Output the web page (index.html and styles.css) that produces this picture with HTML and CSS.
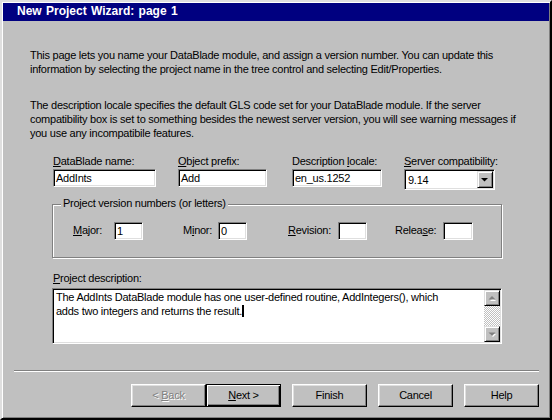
FILE: index.html
```html
<!DOCTYPE html>
<html>
<head>
<meta charset="utf-8">
<title>New Project Wizard</title>
<link rel="stylesheet" href="styles.css">
</head>
<body>
<div class="window">
  <div class="titlebar">New Project Wizard: page 1</div>
  <div class="body">
    <p class="intro">This page lets you name your DataBlade module, and assign a version number. You can update this<br>information by selecting the project name in the tree control and selecting Edit/Properties.</p>
    <p class="intro p2">The description locale specifies the default GLS code set for your DataBlade module. If the server<br>compatibility box is set to something besides the newest server version, you will see warning messages if<br>you use any incompatibile features.</p>

    <div class="fields">
      <div class="field">
        <label class="flabel"><u>D</u>ataBlade name:</label>
        <div class="edit w-name">AddInts</div>
      </div>
      <div class="field">
        <label class="flabel"><u>O</u>bject prefix:</label>
        <div class="edit w-prefix">Add</div>
      </div>
      <div class="field">
        <label class="flabel">Description <u>l</u>ocale:</label>
        <div class="edit w-locale">en_us.1252</div>
      </div>
      <div class="field">
        <label class="flabel"><u>S</u>erver compatibility:</label>
        <div class="combo">
          <span class="combo-text">9.14</span>
          <span class="combo-btn"><svg width="16" height="17" viewBox="0 0 16 17"><polygon points="4,7 11,7 7.5,10.5" fill="#000"/></svg></span>
        </div>
      </div>
    </div>

    <div class="group">
      <span class="legend">Project version numbers (or letters)</span>
      <div class="vrow">
        <div class="vfield"><label class="vlabel"><u>M</u>ajor:</label><div class="edit small">1</div></div>
        <div class="vfield"><label class="vlabel">M<u>i</u>nor:</label><div class="edit small">0</div></div>
        <div class="vfield"><label class="vlabel"><u>R</u>evision:</label><div class="edit small"></div></div>
        <div class="vfield"><label class="vlabel">Relea<u>s</u>e:</label><div class="edit small wide"></div></div>
      </div>
    </div>

    <label class="desc-label"><u>P</u>roject description:</label>
    <div class="memo">
      <div class="memo-text">The AddInts DataBlade module has one user-defined routine, AddIntegers(), which<br>adds two integers and returns the result.<span class="caret"></span></div>
      <div class="vscroll">
        <div class="sbtn"><svg width="14" height="14" viewBox="0 0 14 14"><polygon points="7,6 10,9 4,9" fill="#fff" transform="translate(1,1)"/><polygon points="7,5 10.5,8.5 3.5,8.5" fill="#808080"/></svg></div>
        <div class="track"></div>
        <div class="sbtn"><svg width="14" height="14" viewBox="0 0 14 14"><polygon points="4,6 10,6 7,9" fill="#fff" transform="translate(1,1)"/><polygon points="3.5,5.5 10.5,5.5 7,9" fill="#808080"/></svg></div>
      </div>
    </div>

    <div class="sep"></div>

    <div class="buttons">
      <div class="navpair">
        <button class="btn disabled">&lt; <u>B</u>ack</button>
        <button class="btn default"><u>N</u>ext &gt;</button>
      </div>
      <button class="btn">Finish</button>
      <button class="btn">Cancel</button>
      <button class="btn">Help</button>
    </div>
  </div>
</div>
</body>
</html>
```

FILE: styles.css
```css
* { box-sizing: border-box; }
html, body { margin: 0; padding: 0; background: #c0c0c0; }
body {
  font-family: "Liberation Sans", Arial, sans-serif;
  font-size: 11px;
  line-height: 14px;
  letter-spacing: -0.25px;
  color: #000;
}
u { text-decoration: underline; text-underline-offset: 1px; }

.window {
  width: 552px;
  height: 420px;
  background: #c0c0c0;
  border: 2px solid;
  border-color: #dfdfdf #000 #000 #dfdfdf;
  box-shadow: inset 1px 1px #fff, inset -1px -1px #808080;
  padding: 1px;
  display: flex;
  flex-direction: column;
}

.titlebar {
  height: 18px;
  flex: none;
  background: #000080;
  color: #fff;
  font-weight: bold;
  font-size: 12px;
  line-height: 16px;
  letter-spacing: 0;
  word-spacing: 1px;
  padding-left: 14px;
  white-space: nowrap;
}

.body {
  padding-top: 27px;
  display: flex;
  flex-direction: column;
}

.intro {
  margin: 0 0 0 27px;
  white-space: nowrap;
}
.p2 { margin-top: 22px; }

.fields {
  display: grid;
  grid-template-columns: 125px 114px 112px 91px;
  align-items: start;
  margin: 14px 0 0 50px;
}
.flabel { display: block; height: 14px; white-space: nowrap; }

.edit {
  height: 18px;
  background: #fff;
  border: 1px solid;
  border-color: #808080 #fff #fff #808080;
  box-shadow: inset 1px 1px #000, inset -1px -1px #dfdfdf;
  padding: 1px 0 0 2px;
  line-height: 14px;
  white-space: nowrap;
  overflow: hidden;
}
.field .edit { margin-top: 1px; }
.w-name { width: 103px; }
.w-prefix { width: 89px; }
.w-locale { width: 90px; }

.combo {
  margin-top: 1px;
  width: 91px;
  height: 21px;
  background: #fff;
  border: 1px solid;
  border-color: #808080 #fff #fff #808080;
  box-shadow: inset 1px 1px #000, inset -1px -1px #dfdfdf;
  padding: 1px;
  display: flex;
}
.combo-text { flex: 1; padding: 2px 0 0 2px; line-height: 14px; }
.combo-btn {
  width: 16px;
  height: 17px;
  background: #c0c0c0;
  border: 1px solid;
  border-color: #dfdfdf #000 #000 #dfdfdf;
  box-shadow: inset 1px 1px #fff, inset -1px -1px #808080;
  position: relative;
}
.combo-btn svg { position: absolute; left: -1px; top: -1px; }

.group {
  position: relative;
  margin: 14px 0 0 49px;
  width: 450px;
  height: 54px;
  border: 1px solid #808080;
  box-shadow: inset 1px 1px #fff, 1px 1px #fff;
  padding: 17px 0 0 20px;
}
.legend {
  position: absolute;
  left: 8px;
  top: -9px;
  padding: 0 2px;
  background: #c0c0c0;
  white-space: nowrap;
}
.vrow {
  display: grid;
  grid-template-columns: 110px 105px 107px 78px;
}
.vfield { display: flex; align-items: flex-start; }
.vlabel { width: 41px; padding-top: 1px; white-space: nowrap; }
.vfield:nth-child(2) .vlabel { width: 35px; }
.vfield:nth-child(3) .vlabel { width: 50px; }
.vfield:nth-child(4) .vlabel { width: 48px; }
.edit.small { width: 29px; }
.edit.wide { width: 30px; }

.desc-label {
  display: block;
  margin: 13px 0 0 50px;
  height: 14px;
}

.memo {
  margin: 3px 0 0 49px;
  width: 450px;
  height: 56px;
  background: #fff;
  border: 1px solid;
  border-color: #808080 #fff #fff #808080;
  box-shadow: inset 1px 1px #000, inset -1px -1px #dfdfdf;
  display: flex;
}
.memo-text {
  flex: 1;
  padding: 1px 0 0 3px;
  white-space: nowrap;
}
.caret {
  display: inline-block;
  width: 2px;
  height: 12px;
  background: #000;
  vertical-align: -2px;
}
.vscroll {
  width: 16px;
  margin: 1px 1px 1px 0;
  display: flex;
  flex-direction: column;
}
.sbtn {
  width: 16px;
  height: 16px;
  flex: none;
  background: #c0c0c0;
  border: 1px solid;
  border-color: #dfdfdf #000 #000 #dfdfdf;
  box-shadow: inset 1px 1px #fff, inset -1px -1px #808080;
}
.sbtn svg { display: block; }
.track {
  flex: 1;
  background-color: #fff;
  background-image:
    linear-gradient(45deg, #c0c0c0 25%, transparent 25%, transparent 75%, #c0c0c0 75%),
    linear-gradient(45deg, #c0c0c0 25%, transparent 25%, transparent 75%, #c0c0c0 75%);
  background-size: 2px 2px;
  background-position: 0 0, 1px 1px;
}

.sep {
  margin: 26px 0 0 11px;
  width: 525px;
  height: 2px;
  border-top: 1px solid #808080;
  border-bottom: 1px solid #fff;
}

.buttons {
  margin-top: 12px;
  display: flex;
  justify-content: flex-end;
  gap: 11px;
  padding-right: 10px;
}
.navpair { display: flex; }
.btn {
  width: 75px;
  height: 23px;
  margin: 0;
  padding: 0;
  font-family: inherit;
  font-size: 11px;
  line-height: 21px;
  letter-spacing: inherit;
  color: #000;
  background: #c0c0c0;
  border: 1px solid;
  border-color: #fff #000 #000 #fff;
  box-shadow: inset -1px -1px #808080, inset 1px 1px #dfdfdf;
  text-align: center;
}
.btn.default {
  border-color: #000;
  box-shadow: inset 1px 1px #fff, inset -1px -1px #000, inset -2px -2px #808080;
}
.btn.disabled {
  color: #808080;
  text-shadow: 1px 1px #fff;
}
```
